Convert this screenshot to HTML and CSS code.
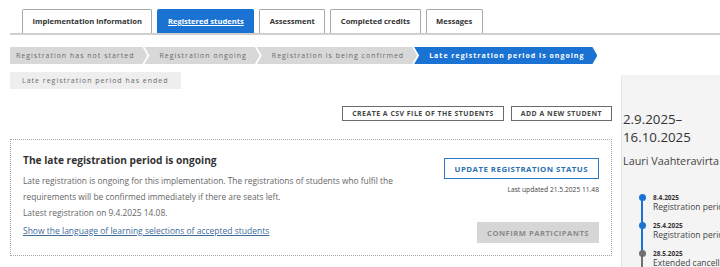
FILE: index.html
```html
<!DOCTYPE html>
<html lang="en">
<head>
<meta charset="utf-8">
<title>Registered students</title>
<link rel="stylesheet" href="styles.css">
</head>
<body>
<nav class="tabs">
  <a class="tab">Implementation information</a>
  <a class="tab tab-active">Registered students</a>
  <a class="tab">Assessment</a>
  <a class="tab">Completed credits</a>
  <a class="tab">Messages</a>
</nav>
<div class="page">
  <main class="main">
    <ol class="steps">
      <li class="step step-first">Registration has not started</li>
      <li class="step">Registration ongoing</li>
      <li class="step">Registration is being confirmed</li>
      <li class="step step-current">Late registration period is ongoing</li>
      <li class="step step-future">Late registration period has ended</li>
    </ol>
    <div class="actions">
      <button class="btn">CREATE A CSV FILE OF THE STUDENTS</button>
      <button class="btn">ADD A NEW STUDENT</button>
    </div>
    <section class="status">
      <div class="status-text">
        <h2 class="status-title">The late registration period is ongoing</h2>
        <p class="status-desc">Late registration is ongoing for this implementation. The registrations of students who fulfil the requirements will be confirmed immediately if there are seats left.<br>Latest registration on 9.4.2025 14.08.</p>
        <a class="status-link" href="#">Show the language of learning selections of accepted students</a>
      </div>
      <div class="status-actions">
        <button class="btn-outline">UPDATE REGISTRATION STATUS</button>
        <div class="updated">Last updated 21.5.2025 11.48</div>
        <button class="btn-disabled">CONFIRM PARTICIPANTS</button>
      </div>
    </section>
  </main>
  <aside class="panel">
    <div class="dates">2.9.2025–<br>16.10.2025</div>
    <div class="teacher">Lauri Vaahteravirta</div>
    <ul class="timeline">
      <li class="tl-item tl-done"><span class="tl-date">8.4.2025</span><span class="tl-label">Registration period starts</span></li>
      <li class="tl-item tl-done"><span class="tl-date">25.4.2025</span><span class="tl-label">Registration period ends</span></li>
      <li class="tl-item"><span class="tl-date">28.5.2025</span><span class="tl-label">Extended cancellation ends</span></li>
    </ul>
  </aside>
</div>
</body>
</html>
```
FILE: styles.css
```css
* { box-sizing: border-box; }
html, body { margin: 0; padding: 0; background: #fff; }
body {
  font-family: "Open Sans", "Noto Sans", sans-serif;
  color: #333;
  width: 720px;
  height: 267px;
  overflow: hidden;
}

.tabs {
  display: flex;
  gap: 5px;
  margin-left: 10px;
  padding: 9px 0 0 12px;
  border-bottom: 2px solid #cfcfcf;
}
.tab {
  display: block;
  height: 24px;
  padding: 0 9.5px;
  border: 1px solid #a8a8a8;
  border-bottom: none;
  border-radius: 2px 2px 0 0;
  font-size: 7.6px;
  font-weight: 700;
  line-height: 23px;
  color: #333;
  white-space: nowrap;
}
.tab-active {
  background: #1a73d2;
  border-color: #1a73d2;
  color: #fff;
  text-decoration: underline;
}

.page {
  display: flex;
  margin-top: 12px;
}
.main {
  width: 612px;
  padding-left: 10px;
  flex: none;
}

.steps {
  list-style: none;
  margin: 0;
  padding: 0;
  display: flex;
  flex-wrap: wrap;
  row-gap: 8px;
}
.step {
  height: 17px;
  line-height: 17px;
  background: #d8d8d8;
  color: #6a6a6a;
  font-size: 7px;
  letter-spacing: 1px;
  padding: 0 13px 0 15px;
  margin-left: -3px;
  white-space: nowrap;
  clip-path: polygon(0 0, calc(100% - 5px) 0, 100% 50%, calc(100% - 5px) 100%, 0 100%, 5px 50%);
}
.step-first {
  margin-left: 0;
  padding-left: 6px;
  clip-path: polygon(0 0, calc(100% - 5px) 0, 100% 50%, calc(100% - 5px) 100%, 0 100%);
}
.step-current {
  background: #1a73d2;
  color: #fff;
  font-weight: 700;
}
.step-future {
  margin-left: 0;
  background: #eeeeee;
  padding: 0 12px;
  clip-path: none;
}

.actions {
  display: flex;
  justify-content: flex-end;
  gap: 7px;
  margin-top: 17px;
}
.btn {
  height: 15px;
  padding: 0 9px;
  border: 1px solid #6b6b6b;
  background: #fff;
  font-family: inherit;
  font-size: 6.9px;
  font-weight: 700;
  letter-spacing: 0.5px;
  color: #444;
  line-height: 13px;
}

.status {
  display: flex;
  justify-content: space-between;
  margin-top: 18px;
  height: 117px;
  border: 1px dotted #a6a6a6;
  padding: 12px 12px 0 12px;
}
.status-title {
  margin: 0;
  font-size: 10.2px;
  font-weight: 700;
  color: #333;
  line-height: 16px;
}
.status-desc {
  margin: 5px 0 0;
  width: 380px;
  font-size: 8.4px;
  line-height: 16px;
  color: #666;
}
.status-link {
  display: block;
  margin-top: 3px;
  font-size: 8.5px;
  line-height: 14px;
  color: #3d6b9a;
  text-decoration: underline;
}
.status-actions {
  display: flex;
  flex-direction: column;
  align-items: flex-end;
  padding-top: 6px;
}
.btn-outline {
  height: 21px;
  padding: 0 10px;
  border: 1px solid #2b78c5;
  background: #fff;
  color: #2b6fb3;
  font-family: inherit;
  font-size: 7.8px;
  font-weight: 700;
  letter-spacing: 0.5px;
}
.updated {
  margin-top: 6px;
  font-size: 6.7px;
  color: #444;
}
.btn-disabled {
  margin-top: 28px;
  height: 21px;
  padding: 0 10px;
  border: none;
  background: #d6d6d6;
  color: #8a8a8a;
  font-family: inherit;
  font-size: 7.6px;
  font-weight: 700;
  letter-spacing: 0.5px;
}

.panel {
  flex: 1;
  margin-left: 9px;
  margin-top: 28px;
  height: 200px;
  background: #f4f4f4;
  border-left: 1px solid #e6e6e6;
  padding: 35px 0 0 1px;
  white-space: nowrap;
  overflow: hidden;
}
.dates {
  font-size: 13.3px;
  line-height: 18px;
  color: #333;
}
.teacher {
  margin-top: 7px;
  font-size: 10.8px;
  color: #444;
}
.timeline {
  list-style: none;
  margin: 26px 0 0;
  padding: 0 0 0 30px;
}
.tl-item {
  position: relative;
  height: 28px;
}
.tl-item::before {
  content: "";
  position: absolute;
  left: -12px;
  top: 0;
  width: 2px;
  height: 100%;
  background: #707070;
}
.tl-done::before { background: #1a73d2; }
.tl-item:first-child::before { top: 3px; }
.tl-item::after {
  content: "";
  position: absolute;
  left: -14.5px;
  top: 0;
  width: 7px;
  height: 7px;
  border-radius: 50%;
  background: #707070;
}
.tl-done::after { background: #1a73d2; }
.tl-date {
  display: block;
  font-size: 6.5px;
  font-weight: 700;
  line-height: 8px;
  color: #333;
}
.tl-label {
  display: block;
  font-size: 8.5px;
  line-height: 10px;
  color: #444;
}
```
